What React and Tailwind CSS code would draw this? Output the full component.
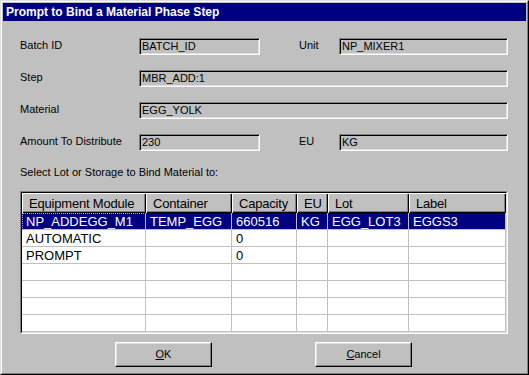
import React from "react";

const font = { fontFamily: '"Liberation Sans", Arial, sans-serif' };

function Field({ w, children }) {
  return (
    <div
      className={`${w} h-[17px] bg-[#c0c0c0] border border-t-[#808080] border-l-[#808080] border-b-white border-r-white shadow-[inset_1px_1px_0_#000,inset_-1px_-1px_0_#dfdfdf] pl-[2px] flex items-center text-[11px] text-black leading-none`}
    >
      {children}
    </div>
  );
}

function Label({ w, className = "", children }) {
  return (
    <div className={`${w} ${className} text-[11px] text-black leading-none -mt-[2px]`}>
      {children}
    </div>
  );
}

const cols = [
  { name: "Equipment Module", w: "w-[124px]" },
  { name: "Container", w: "w-[86px]" },
  { name: "Capacity", w: "w-[65px]" },
  { name: "EU", w: "w-[31px]" },
  { name: "Lot", w: "w-[81px]" },
  { name: "Label", w: "w-[97px]" },
];

const rows = [
  ["NP_ADDEGG_M1", "TEMP_EGG", "660516", "KG", "EGG_LOT3", "EGGS3"],
  ["AUTOMATIC", "", "0", "", "", ""],
  ["PROMPT", "", "0", "", "", ""],
  ["", "", "", "", "", ""],
  ["", "", "", "", "", ""],
  ["", "", "", "", "", ""],
  ["", "", "", "", "", ""],
];

function Button({ children }) {
  return (
    <div className="w-[97px] h-[25px] bg-[#c0c0c0] border border-t-white border-l-white border-b-black border-r-black shadow-[inset_-1px_-1px_0_#808080,inset_1px_1px_0_#dfdfdf] flex items-center justify-center text-[11px] text-black leading-none">
      {children}
    </div>
  );
}

export default function App() {
  return (
    <div
      style={font}
      className="w-[529px] h-[375px] bg-[#c0c0c0] border border-t-[#dfdfdf] border-l-[#dfdfdf] border-b-black border-r-black overflow-hidden"
    >
      <div className="w-full h-full border border-t-white border-l-white border-b-[#808080] border-r-[#808080] p-[1px] flex flex-col">
        <div className="h-[18px] bg-[#000080] text-white font-bold text-[12px] flex items-center pl-[3px] leading-none shrink-0">
          Prompt to Bind a Material Phase Step
        </div>
        <div className="flex flex-col pl-[17px] pt-[17px]">
          <div className="flex items-center h-[17px]">
            <Label w="w-[119px]">Batch ID</Label>
            <Field w="w-[121px]">BATCH_ID</Field>
            <Label w="w-[40px]" className="ml-[39px]">Unit</Label>
            <Field w="w-[169px]">NP_MIXER1</Field>
          </div>
          <div className="flex items-center h-[17px] mt-[15px]">
            <Label w="w-[119px]">Step</Label>
            <Field w="w-[369px]">MBR_ADD:1</Field>
          </div>
          <div className="flex items-center h-[17px] mt-[15px]">
            <Label w="w-[119px]">Material</Label>
            <Field w="w-[369px]">EGG_YOLK</Field>
          </div>
          <div className="flex items-center h-[17px] mt-[15px]">
            <Label w="w-[119px]">Amount To Distribute</Label>
            <Field w="w-[121px]">230</Field>
            <Label w="w-[40px]" className="ml-[39px]">EU</Label>
            <Field w="w-[169px]">KG</Field>
          </div>
          <div className="mt-[15px] h-[13px] text-[11px] leading-[13px] text-black">
            Select Lot or Storage to Bind Material to:
          </div>
          <div className="mt-[12px] w-[488px] h-[143px] border border-t-[#808080] border-l-[#808080] border-b-white border-r-white">
            <div className="w-full h-full border border-t-black border-l-black border-b-[#dfdfdf] border-r-[#dfdfdf] bg-white flex flex-col">
              <div className="flex h-[20px] shrink-0">
                {cols.map((c) => (
                  <div
                    key={c.name}
                    className={`${c.w} h-full bg-[#c0c0c0] shadow-[inset_1px_1px_0_#fff,inset_-1px_-1px_0_#000,inset_-2px_-2px_0_#808080] pl-[7px] flex items-center text-[13px] tracking-[-0.2px] text-black leading-none whitespace-nowrap overflow-hidden`}
                  >
                    {c.name}
                  </div>
                ))}
              </div>
              {rows.map((r, i) => (
                <div
                  key={i}
                  className={`flex h-[17px] shrink-0 ${i === 0 ? "bg-[#000080] text-white" : "bg-white text-black"}`}
                >
                  {r.map((cell, j) => (
                    <div
                      key={j}
                      className={`${cols[j].w} h-full border-r border-b border-[#c0c0c0] pl-[4px] flex items-center text-[13px] leading-none whitespace-nowrap overflow-hidden ${i === 0 && j === 0 ? "outline outline-1 outline-dotted outline-[#c0c080] -outline-offset-1" : ""}`}
                    >
                      {cell}
                    </div>
                  ))}
                </div>
              ))}
            </div>
          </div>
          <div className="flex mt-[8px] pl-[95px] gap-[103px]">
            <Button>
              <span>
                <span className="underline">O</span>K
              </span>
            </Button>
            <Button>
              <span>
                <span className="underline">C</span>ancel
              </span>
            </Button>
          </div>
        </div>
      </div>
    </div>
  );
}
